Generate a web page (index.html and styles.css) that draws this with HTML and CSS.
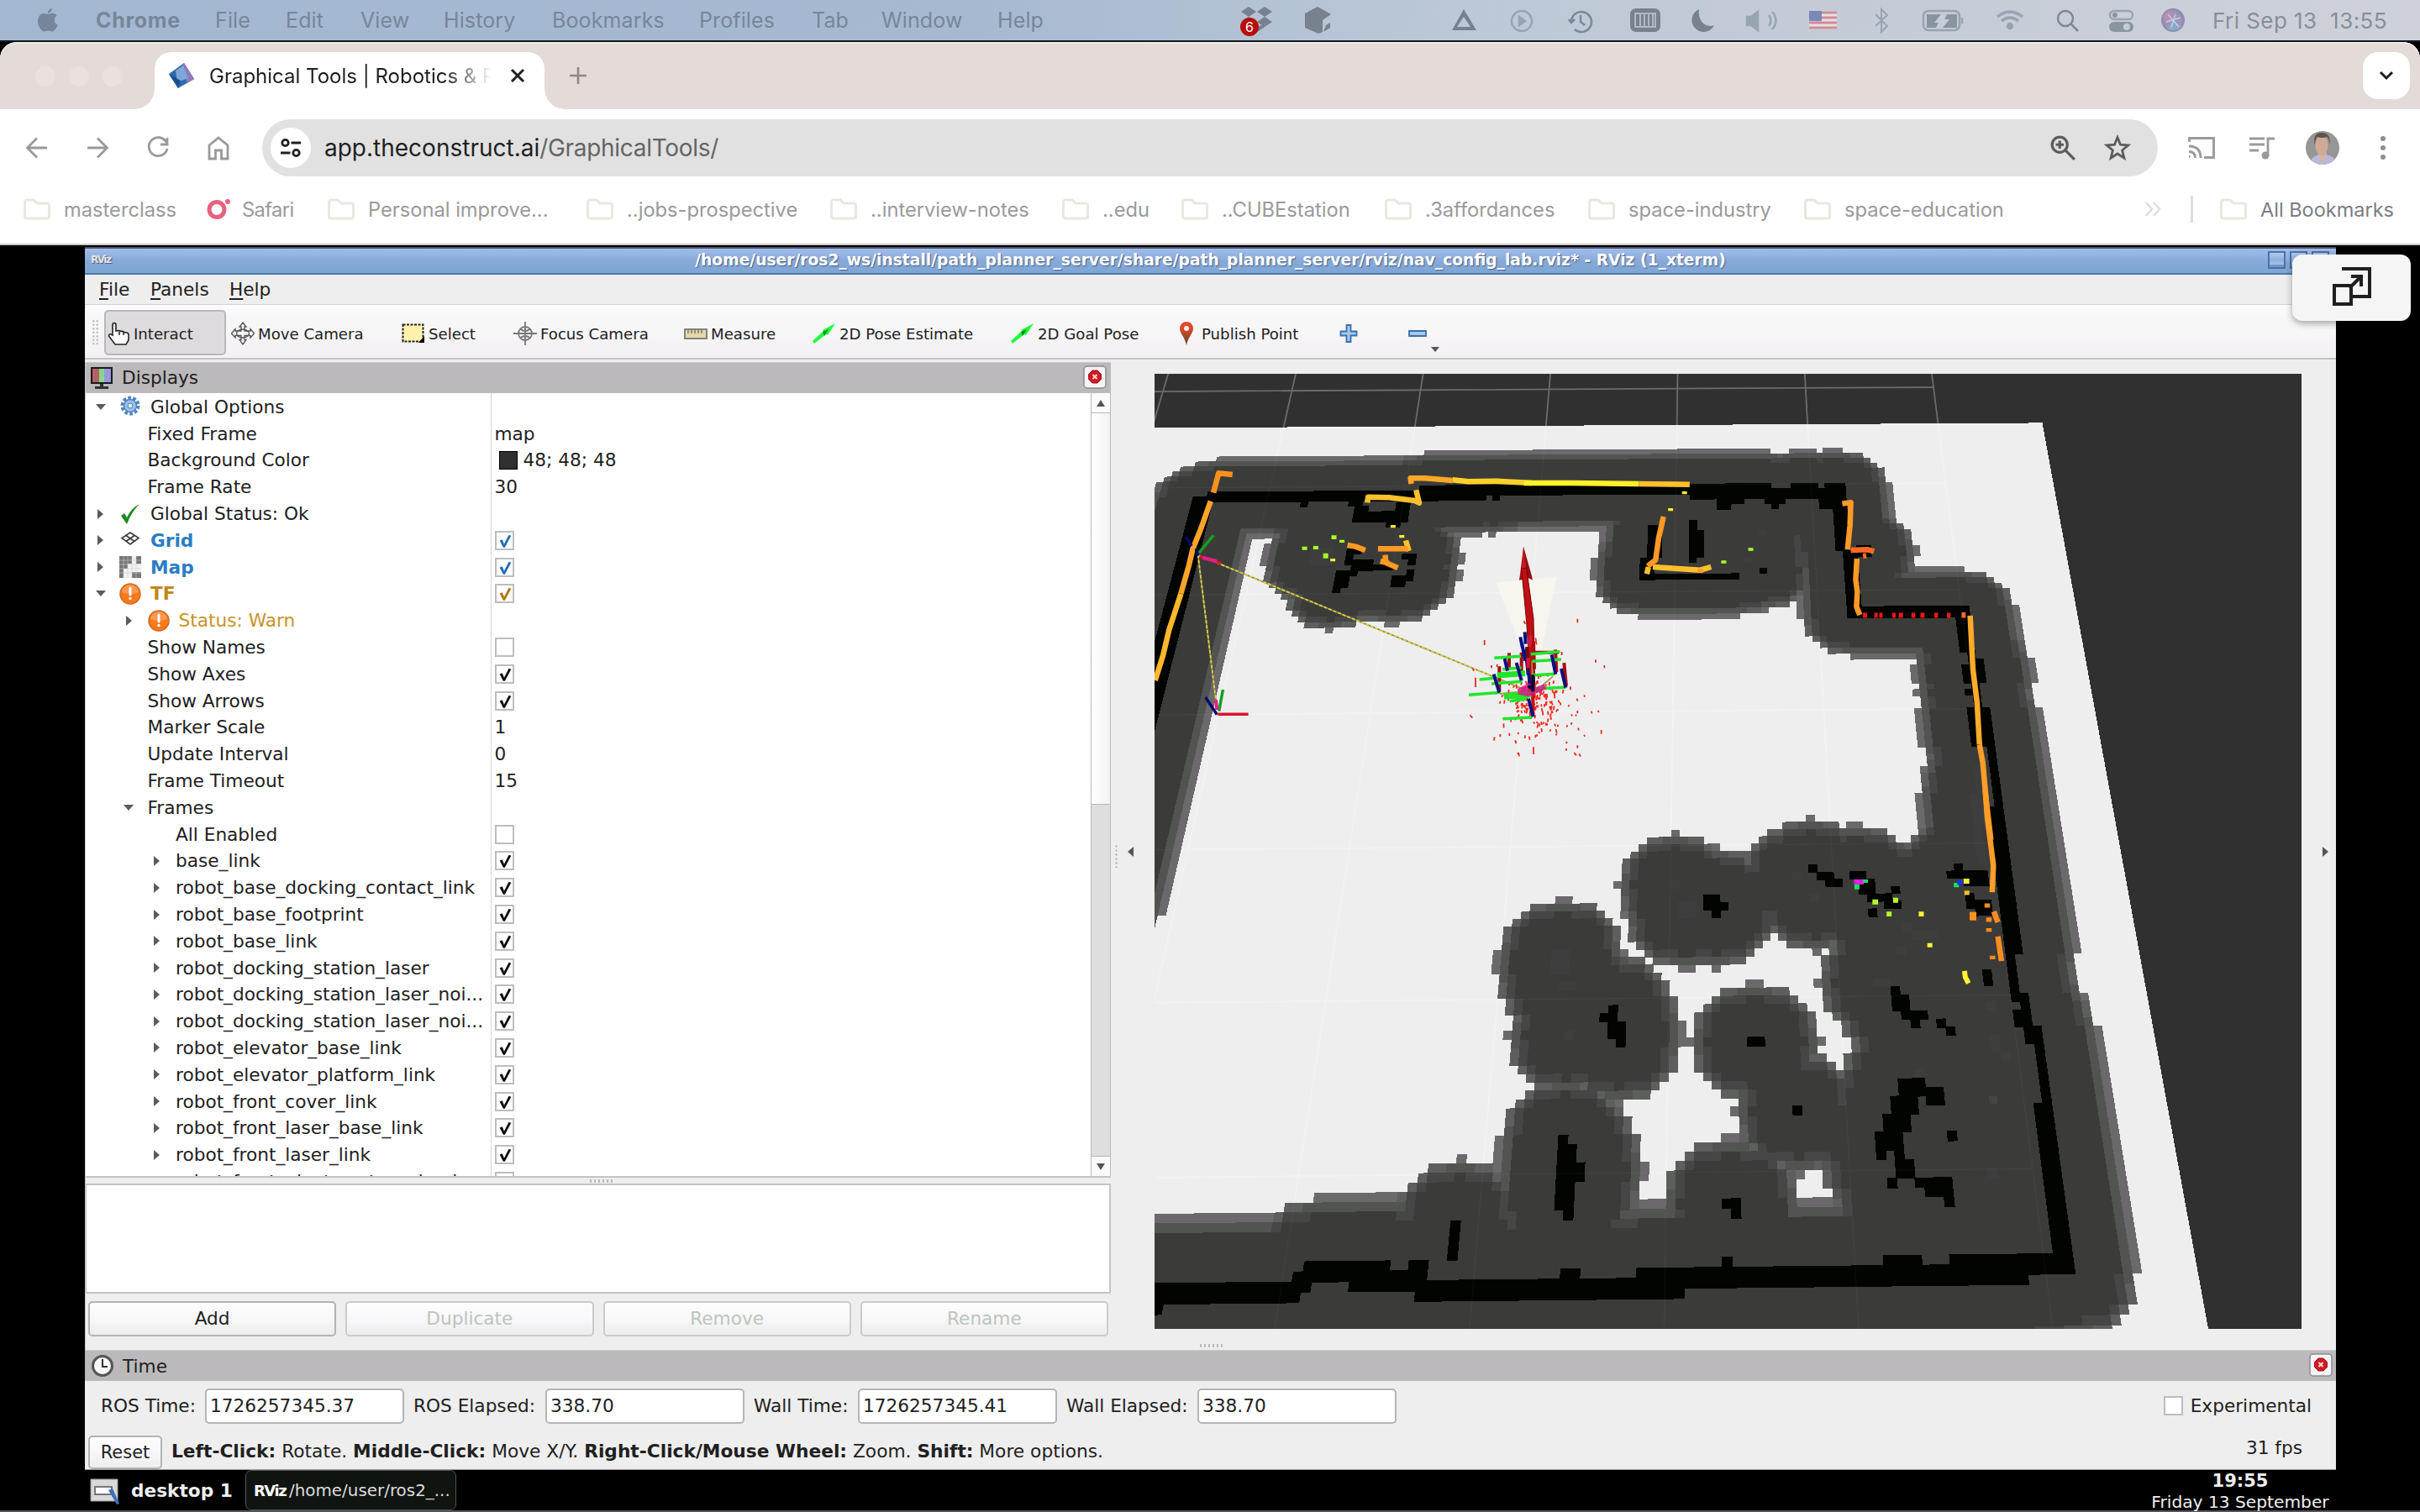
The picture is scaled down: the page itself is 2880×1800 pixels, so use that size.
FILE: index.html
```html
<!DOCTYPE html>
<html lang="en">
<head>
<meta charset="utf-8">
<title>Graphical Tools | Robotics</title>
<link rel="stylesheet" href="styles.css">
</head>
<body>
<svg class="defs" aria-hidden="true">
  <symbol id="tick" viewBox="0 0 22 22"><path d="M4 10.500 7.500 9l2.300 6L16 3l3 1-8.200 15.500H8.700z"/></symbol>
  <symbol id="folder" viewBox="0 0 32 26"><path d="M4 2h8l4 4h12a2.500 2.500 0 0 1 2.500 2.500v13A2.500 2.500 0 0 1 28 24H4a2.500 2.500 0 0 1-2.500-2.500v-17A2.500 2.500 0 0 1 4 2z" fill="none" stroke="#e7e8df" stroke-width="3"/></symbol>
  <symbol id="close" viewBox="0 0 28 28"><rect x="1" y="1" width="26" height="26" rx="4" fill="#f6f4f7" stroke="#8c8a8d" stroke-width="1.500"/><path d="M11 6h6l4.500 4.500v6L17 21h-6l-4.500-4.500v-6z" fill="#cf1b22" stroke="#a5141a"/><path d="m11.500 11 5 5m0-5-5 5" stroke="#f5d8d8" stroke-width="2"/></symbol>
  <symbol id="warn" viewBox="0 0 26 26"><circle cx="13" cy="13" r="12" fill="#f57a1c" stroke="#d9661a" stroke-width="1.500"/><path d="M3 11a10 9 0 0 1 20 0q-10 4-20 0z" fill="#f9a768" opacity=".7"/><path d="M13 6v8" stroke="#fff" stroke-width="3" stroke-linecap="round"/><circle cx="13" cy="18.500" r="1.700" fill="#fff"/></symbol>
  <symbol id="pose" viewBox="0 0 28 26"><path d="M0 22 13 10l-1-1L27 1 18 15l-2-1L2 25z" fill="#1dff3a"/><path d="m12 11 7-3-5 8z" fill="#12892a"/></symbol>
</svg>

<header class="menubar">
  <svg class="apple" viewBox="0 0 26 32"><path d="M18 2c0 3-2.500 5.500-5 5.500C12.800 4.500 15.500 2.200 18 2zM13 9c1.500 0 3-1.300 5.500-1.300 2 0 4 1.100 5.200 3-4.500 2.600-3.700 9 1 10.800C23.500 25 21 29.500 18.200 29.500c-1.800 0-2.600-1.100-4.800-1.100s-3 1.100-4.800 1.100C5 29.500 1 23 1 17.300 1 11.500 4.500 8 8 8c2.300 0 3.700 1 5 1z"/></svg>
  <nav class="menus">
    <b>Chrome</b><span>File</span><span>Edit</span><span>View</span><span>History</span><span>Bookmarks</span><span>Profiles</span><span>Tab</span><span>Window</span><span>Help</span>
  </nav>
  <svg class="tray" viewBox="1460 0 1160 48">
    <g fill="#78828e">
      <path d="m1486 8 9 6-9 6-9-6zM1505 8l9 6-9 6-9-6zM1486 20l9 6-9 6-9-6zM1505 20l9 6-9 6-9-6zM1495 33l10-5v4l-10 7z"/>
      <path d="m1568 8 16 9-10 7v14l-5 2-16-7V16zM1583 27v6l-8 5 3-8z"/>
      <path fill-rule="evenodd" d="M1742 11l15 25h-29zm0 9-8 12h16z"/>
      <rect x="1940" y="10" width="36" height="28" rx="7"/>
      <path d="M2022 11a14 14 0 1 0 18 19c-11 4-20-6-18-19z"/>
    </g>
    <rect x="1946" y="16" width="24" height="16" fill="none" stroke="#c0cad8" stroke-width="1.500"/><path d="M1952 17v14m5-14v14m5-14v14m5-14v14" stroke="#c0cad8" stroke-width="1.500"/>
    <g fill="none" stroke="#98a4b2" stroke-width="2.500">
      <circle cx="1811" cy="25" r="12"/><path d="m1808 20 7 5-7 5z" fill="#98a4b2"/>
      <path d="M2105 18q5 6 0 13m4-17q9 10 0 21"/><path d="M2079 20h5l8-6v22l-8-6h-5z" fill="#98a4b2"/>
      <path d="m2232 17 14 14-7 7V11l7 7-14 13" stroke-width="2"/>
      <rect x="2289" y="13" width="43" height="23" rx="6"/><path d="M2335 21v7"/>
      <path d="M2377 20q15-12 30 0m-25 5q10-8 20 0" stroke-width="3.500"/><circle cx="2392" cy="31" r="3" fill="#98a4b2"/>
    </g>
    <path d="M2293 17h17l-8 10h5l-3 6h-11zm36 0v16h-17l8-10h-6l3-6z" fill="#8a93a0"/>
    <g fill="none" stroke="#7c8896" stroke-width="2.500">
      <path d="M1870 26a12 12 0 1 1 4 9M1881 18v8l5 4m-19-7 3 4 4-4"/>
      <circle cx="2458" cy="22" r="9"/><path d="m2465 29 8 8"/>
      <rect x="2511" y="13" width="27" height="10" rx="5" stroke="#98a4b2"/>
    </g>
    <rect x="2510" y="26" width="29" height="12" rx="6" fill="#8a95a2"/><circle cx="2531" cy="32" r="4" fill="#c6cbd4"/><circle cx="2517" cy="18" r="3" fill="#8a95a2"/>
    <rect x="2153" y="13" width="33" height="22" fill="#e6dfe6"/><path d="M2153 15h33m-33 6h33m-33 6h33m-33 6h33" stroke="#d08c95" stroke-width="3"/><rect x="2153" y="13" width="15" height="12" fill="#7c88b8"/>
    <circle cx="2586" cy="24" r="14" fill="#8f8cb0"/><circle cx="2586" cy="24" r="11" fill="#a092b8"/><path d="M2584 24 2574 21a12 12 0 0 1 11-9z" fill="#b88fac"/><path d="M2586 24l10 7a12 12 0 0 1-17 3z" fill="#86a9c6"/><path d="m2580 17 13 15m-9 1 5-16m-11 9 17-5" stroke="#c9cde0" stroke-width="1.500"/>
    <circle cx="1487" cy="32" r="11" fill="#b90b07"/><text x="1487" y="38" text-anchor="middle" font-size="16" fill="#fff">6</text>
  </svg>
  <span class="clock">Fri Sep 13&nbsp; 13:55</span>
</header>

<section class="chrome">
  <div class="tabs">
    <i class="dot"></i><i class="dot"></i><i class="dot"></i>
    <div class="tab">
      <svg class="favicon" viewBox="0 0 30 30"><path d="M18 0 30 19 11 30 0 13z" fill="#2a6cae"/><path d="M18 0 30 19 22 24 14 6z" fill="#8f78bb"/><path d="m8 9 9-6 6 15-13 5z" fill="#7fa6d6"/><path d="m0 13 11 17 3-9z" fill="#1c4f90"/></svg>
      <span class="tabname">Graphical Tools | Robotics &amp; R</span>
      <svg class="x" viewBox="0 0 18 18"><path d="m2 2 14 14M16 2 2 16" stroke="#1f1f1f" stroke-width="3"/></svg>
    </div>
    <svg class="plus" viewBox="0 0 20 20"><path d="M10 0v20M0 10h20" stroke="#8e8985" stroke-width="2.600"/></svg>
    <span class="tabmenu"><svg viewBox="0 0 18 12"><path d="m2 2 7 7 7-7" fill="none" stroke="#1f1f1f" stroke-width="3"/></svg></span>
  </div>
  <div class="toolbar">
    <span class="nav"><svg viewBox="0 0 32 32"><path d="M28 16H5M16 4.500 4.500 16 16 27.500"/></svg></span>
    <span class="nav"><svg viewBox="0 0 32 32"><path d="M4 16h23M16 4.500 27.500 16 16 27.500"/></svg></span>
    <span class="nav"><svg viewBox="0 0 32 32"><path d="M26 9.500A11 11 0 1 0 27 17M27 4v8h-8"/></svg></span>
    <span class="nav"><svg viewBox="0 0 32 32"><path d="M5 13 16 4l11 9v16h-7.500V19h-7v10H5z"/></svg></span>
    <div class="omnibox">
      <span class="site"><svg viewBox="0 0 26 26"><g fill="none" stroke="#1f1f1f" stroke-width="2.800"><circle cx="6.500" cy="7" r="3.700"/><path d="M13.500 7H25M1 19h11.500"/><circle cx="19.500" cy="19" r="3.700"/></g></svg></span>
      <span class="url">app.theconstruct.ai<em>/GraphicalTools/</em></span>
      <span class="obi"><svg viewBox="0 0 30 30" fill="none" stroke="#5c5c5c" stroke-width="3"><circle cx="11.500" cy="11.500" r="8.500"/><path d="m18 18 10 10M11.500 7v9M7 11.500h9"/></svg></span>
      <span class="obi"><svg viewBox="0 0 32 32"><path d="m16 3.500 3.500 8.700 9.300.7-7.200 6 2.300 9.200L16 23l-7.900 5.100 2.300-9.200-7.200-6 9.300-.7z" fill="none" stroke="#5c5c5c" stroke-width="2.800"/></svg></span>
    </div>
    <span class="nav"><svg viewBox="0 0 32 32"><path d="M1.500 9V4.500h29v23H19M1 14q14 0 14 14M1 20.500q7.500 0 7.500 7.500M1 26.500h1.500"/></svg></span>
    <span class="nav"><svg viewBox="0 0 32 32"><path d="M1 5h18M1 12h18M1 19h11M23 25V5h8"/><circle cx="20" cy="25" r="4.500" fill="#9a9a9a" stroke="none"/></svg></span>
    <span class="nav"><svg class="avatar" viewBox="0 0 40 40"><defs><clipPath id="av"><circle cx="20" cy="20" r="20"/></clipPath></defs><g clip-path="url(#av)"><path d="M0 0h40v40H0z" fill="#969694"/><path d="M4 40q2-10 12-12h8q10 1 14 12z" fill="#bcb8da"/><path d="m14 26 6 14 5-14z" fill="#d5b5a8"/><ellipse cx="19" cy="17" rx="7.500" ry="12" fill="#d0a997"/><path d="M10.500 17Q8 2 19 2t9.500 14q-1-7-3-9-6 2-12 0-2 3-3 10z" fill="#5f5350"/></g></svg></span>
    <span class="nav"><svg viewBox="0 0 32 32"><g fill="#8e8e8e" stroke="none"><circle cx="16" cy="5" r="3"/><circle cx="16" cy="16" r="3"/><circle cx="16" cy="27" r="3"/></g></svg></span>
  </div>
  <div class="bookmarks">
    <span class="bm"><svg><use href="#folder"/></svg>masterclass</span>
    <span class="bm sf"><svg viewBox="0 0 32 26"><circle cx="16" cy="13.500" r="9" fill="none" stroke="#e8617e" stroke-width="5"/><circle cx="29" cy="4" r="3" fill="#e8617e"/></svg>Safari</span>
    <span class="bm"><svg><use href="#folder"/></svg>Personal improve...</span>
    <span class="bm"><svg><use href="#folder"/></svg>..jobs-prospective</span>
    <span class="bm"><svg><use href="#folder"/></svg>..interview-notes</span>
    <span class="bm"><svg><use href="#folder"/></svg>..edu</span>
    <span class="bm"><svg><use href="#folder"/></svg>..CUBEstation</span>
    <span class="bm"><svg><use href="#folder"/></svg>.3affordances</span>
    <span class="bm"><svg><use href="#folder"/></svg>space-industry</span>
    <span class="bm"><svg><use href="#folder"/></svg>space-education</span>
    <span class="more"><svg viewBox="0 0 20 18"><path d="m2 1 7 8-7 8m9-16 7 8-7 8" fill="none" stroke="#dedede" stroke-width="2.500"/></svg></span>
    <span class="bm all"><svg><use href="#folder"/></svg>All Bookmarks</span>
  </div>
</section>

<main class="stage">
  <div class="rviz">
    <div class="title"><i class="rvlogo">RViz</i><b>/home/user/ros2_ws/install/path_planner_server/share/path_planner_server/rviz/nav_config_lab.rviz* - RViz (1_xterm)</b><span class="wbtns"><i></i><i></i><i></i></span></div>
    <div class="qmenu"><span><u>F</u>ile</span><span><u>P</u>anels</span><span><u>H</u>elp</span></div>
    <div class="qtools">
      <span class="tool on"><svg viewBox="0 0 28 28"><path d="M7 14V4q0-2.500 2-2.500T11 4v7q4-1 6 .5 3-.5 4 1.500 4-1 5 2v7l-3 5H10L2.500 17q0-4 4.500-1z" fill="#fdfdfd" stroke="#222" stroke-width="1.600"/><path d="M15 12v4m5-4v4" stroke="#222" stroke-width="1.500"/></svg>Interact</span>
      <span class="tool"><svg viewBox="0 0 28 28" fill="none" stroke="#555" stroke-width="1.300"><path d="m14 1 4 5h-2v5h7V8.500l4.500 5.500-4.500 5v-2.500h-7v5h2L14 27l-4-5.500h2v-5H5V19L.5 14 5 8.500V11h7V6h-2z"/><ellipse cx="14" cy="14" rx="7.500" ry="5"/></svg>Move Camera</span>
      <span class="tool"><svg viewBox="0 0 28 28"><rect x="1.500" y="3.500" width="24" height="20" fill="#fff3ac" stroke="#222" stroke-width="2" stroke-dasharray="3 1.500"/><path d="m27 17v8h-7z" fill="#000"/></svg>Select</span>
      <span class="tool"><svg viewBox="0 0 28 28" fill="none" stroke="#777" stroke-width="1.800"><circle cx="14" cy="14" r="8"/><path d="M14 0v28M0 14h28M8.500 9q5.500 4 11 0M8.500 19q5.500-4 11 0"/></svg>Focus Camera</span>
      <span class="tool"><svg viewBox="0 0 28 28"><rect x="1" y="9" width="26" height="11" fill="#e5d9a5" stroke="#777" stroke-width="1.800"/><path d="M5 10v4m4-4v4m4-4v4m4-4v4m4-4v4" stroke="#777" stroke-width="1.500"/></svg>Measure</span>
      <span class="tool"><svg><use href="#pose"/></svg>2D Pose Estimate</span>
      <span class="tool"><svg><use href="#pose"/></svg>2D Goal Pose</span>
      <span class="tool"><svg viewBox="0 0 28 28"><defs><linearGradient id="pin" x2="0" y2="1"><stop offset=".3" stop-color="#dc4a2c"/><stop offset="1" stop-color="#5a4420"/></linearGradient></defs><path d="M14 0a8 8 0 0 1 8 8c0 6-6 10-8 20-2-10-8-14-8-20a8 8 0 0 1 8-8z" fill="url(#pin)"/><circle cx="14" cy="8" r="3" fill="#f6ece9"/></svg>Publish Point</span>
      <span class="tool"><svg viewBox="0 0 28 28"><path d="M11.500 4h5v7.500h7v5h-7V24h-5v-7.500h-7v-5h7z" fill="#a5c8ee" stroke="#3b6fa9" stroke-width="1.800"/></svg></span>
      <span class="tool"><svg viewBox="0 0 28 28"><path d="M4 11h20v6H4z" fill="#a5c8ee" stroke="#3b6fa9" stroke-width="1.800"/></svg><i class="drop"></i></span>
    </div>
    <div class="body">
      <div class="dock">
        <div class="dockhead"><svg viewBox="0 0 28 28"><path d="M1 1h26v20H1z" fill="#1b1b1b"/><path d="M3 3h8v16H3z" fill="#b65f66"/><path d="M11 3h6v16h-6z" fill="#86d88a"/><path d="M17 3h8v16h-8z" fill="#9a96e0"/><path d="M12 21h4v3h6v3H6v-3h6z" fill="#333"/></svg>Displays<svg class="cls"><use href="#close"/></svg></div>
        <div class="treebox">
          <div class="tree">
            <div class="row"><span class="n"><i class="ar d"></i><svg viewBox="0 0 26 26"><circle cx="13" cy="12" r="9.500" fill="none" stroke="#4f84bf" stroke-width="4" stroke-dasharray="3.700 2.270"/><circle cx="13" cy="12" r="7.500" fill="#9cc0e8" stroke="#4f84bf" stroke-width="1.500"/><circle cx="13" cy="12" r="3" fill="#dbe8f6" stroke="#4f84bf"/></svg>Global Options</span></div>
            <div class="row l1"><span class="n"><i class="ar"></i>Fixed Frame</span>map</div>
            <div class="row l1"><span class="n"><i class="ar"></i>Background Color</span><i class="sw"></i>48; 48; 48</div>
            <div class="row l1"><span class="n"><i class="ar"></i>Frame Rate</span>30</div>
            <div class="row"><span class="n"><i class="ar r"></i><svg viewBox="0 0 26 26"><path d="m2 15 4-3 3 5Q14 6 24 1 14 11 9 25z" fill="#1e8a22"/></svg>Global Status: Ok</span></div>
            <div class="row blue"><span class="n"><i class="ar r"></i><svg viewBox="0 0 26 26" fill="none" stroke="#3a3a3a" stroke-width="1.600"><path d="m13 4 10 6.500L13 18 3 10.500zM8 7.500l10 7m0-7-10 7"/></svg><b>Grid</b></span><i class="cb"><svg><use href="#tick"/></svg></i></div>
            <div class="row blue"><span class="n"><i class="ar r"></i><svg viewBox="0 0 26 26"><path d="M0 0h26v26H0z" fill="#f2f2f2"/><path d="M0 0h15v9h-5v6H5v11H0zM20 0h6v9h-6zM15 19h11v7H15z" fill="#777"/><path d="M5 0v26M10 0v26M15 0v26M20 0v26M0 5h26M0 10h26M0 15h26M0 20h26" stroke="#ccc" stroke-width=".6"/></svg><b>Map</b></span><i class="cb"><svg><use href="#tick"/></svg></i></div>
            <div class="row gold"><span class="n"><i class="ar d"></i><svg><use href="#warn"/></svg><b>TF</b></span><i class="cb"><svg><use href="#tick"/></svg></i></div>
            <div class="row l1 gold"><span class="n"><i class="ar r"></i><svg><use href="#warn"/></svg>Status: Warn</span></div>
            <div class="row l1"><span class="n"><i class="ar"></i>Show Names</span><i class="cb"></i></div>
            <div class="row l1"><span class="n"><i class="ar"></i>Show Axes</span><i class="cb"><svg><use href="#tick"/></svg></i></div>
            <div class="row l1"><span class="n"><i class="ar"></i>Show Arrows</span><i class="cb"><svg><use href="#tick"/></svg></i></div>
            <div class="row l1"><span class="n"><i class="ar"></i>Marker Scale</span>1</div>
            <div class="row l1"><span class="n"><i class="ar"></i>Update Interval</span>0</div>
            <div class="row l1"><span class="n"><i class="ar"></i>Frame Timeout</span>15</div>
            <div class="row l1"><span class="n"><i class="ar d"></i>Frames</span></div>
            <div class="row l2"><span class="n"><i class="ar"></i>All Enabled</span><i class="cb"></i></div>
            <div class="row l2"><span class="n"><i class="ar r"></i>base_link</span><i class="cb"><svg><use href="#tick"/></svg></i></div>
            <div class="row l2"><span class="n"><i class="ar r"></i>robot_base_docking_contact_link</span><i class="cb"><svg><use href="#tick"/></svg></i></div>
            <div class="row l2"><span class="n"><i class="ar r"></i>robot_base_footprint</span><i class="cb"><svg><use href="#tick"/></svg></i></div>
            <div class="row l2"><span class="n"><i class="ar r"></i>robot_base_link</span><i class="cb"><svg><use href="#tick"/></svg></i></div>
            <div class="row l2"><span class="n"><i class="ar r"></i>robot_docking_station_laser</span><i class="cb"><svg><use href="#tick"/></svg></i></div>
            <div class="row l2"><span class="n"><i class="ar r"></i>robot_docking_station_laser_noi...</span><i class="cb"><svg><use href="#tick"/></svg></i></div>
            <div class="row l2"><span class="n"><i class="ar r"></i>robot_docking_station_laser_noi...</span><i class="cb"><svg><use href="#tick"/></svg></i></div>
            <div class="row l2"><span class="n"><i class="ar r"></i>robot_elevator_base_link</span><i class="cb"><svg><use href="#tick"/></svg></i></div>
            <div class="row l2"><span class="n"><i class="ar r"></i>robot_elevator_platform_link</span><i class="cb"><svg><use href="#tick"/></svg></i></div>
            <div class="row l2"><span class="n"><i class="ar r"></i>robot_front_cover_link</span><i class="cb"><svg><use href="#tick"/></svg></i></div>
            <div class="row l2"><span class="n"><i class="ar r"></i>robot_front_laser_base_link</span><i class="cb"><svg><use href="#tick"/></svg></i></div>
            <div class="row l2"><span class="n"><i class="ar r"></i>robot_front_laser_link</span><i class="cb"><svg><use href="#tick"/></svg></i></div>
            <div class="row l2"><span class="n"><i class="ar"></i>robot_front_pivot_motor_wheel</span><i class="cb"></i></div>
          </div>
          <div class="scroll"><i class="sb up"></i><i class="thumb"></i><i class="track"></i><i class="sb down"></i></div>
        </div>
        <div class="grip"><i></i></div>
        <div class="desc"></div>
        <div class="btns"><span>Add</span><span class="off">Duplicate</span><span class="off">Remove</span><span class="off">Rename</span></div>
      </div>
      <div class="side"><i class="vgrip"></i><i class="tri l"></i></div>
      <div class="view">
        <svg class="scene" viewBox="1374 445 1365 1137" preserveAspectRatio="none">
          <rect x="1374" y="445" width="1365" height="1137" fill="#303030"/>
          <g id="map"></g>
          <g transform="translate(1370 440) scale(.4719 .33333)">
            <path class="ln" stroke="#ff9020" d="M205 375 170 370 157 440"/>
            <path class="ln" stroke="#ffa428" d="M150 470 125 570 105 640 95 700 75 800"/>
            <path class="ln" stroke="#ffb82a" d="M75 800 45 930 30 1020 10 1110"/>
            <path class="ln" stroke="#ffa828" d="M656 408 654 388 690 388 760 396"/>
            <path class="ln" stroke="#ffd02c" d="M760 394 800 400 870 398 960 405"/>
            <path class="ln" stroke="#fff02a" d="M940 405 1060 405 1230 408"/>
            <path class="ln" stroke="#ffc02c" d="M1230 408 1358 410M545 475 547 455 600 457 665 468 676 476 668 430"/>
            <path class="ln" stroke="#ffc02c" d="M642 610 650 648M1265 705 1385 716 1412 705M1254 705 1250 730"/>
            <path class="ln" stroke="#ff9a24" d="M648 640 572 640M590 662 592 690 622 708M495 627 515 632 540 645M578 684 600 692M1292 525 1280 600 1272 680 1252 702M1385 712v14"/>
            <path class="sq" stroke="#ffee30" d="M610 555v10M632 591v10M458 675v10M1345 435v10M1310 495v10"/>
            <path class="sq" stroke="#a6ff28" d="M461 592v14M481 608v10M387 632v12M415 630v12M440 656v18M1512 637v10M1444 682v10"/>
          </g>
          <g transform="translate(2000 440) scale(.4847 .35714)">
            <path class="ln" stroke="#ff9a26" d="M397 447 418 443 416 520 410 600M433 630 430 700 434 740 432 790 440 818"/>
            <path class="ln" stroke="#ff6a24" d="M418 602 460 600 475 606M448 622 456 620M690 818 700 818"/>
            <path class="sq" stroke="#ff1515" d="M448 819h10M476 819h8M488 819h8M520 819h8M536 819h10M567 819h9M589 819h10M623 819h9M654 819h9"/>
            <path class="ln" stroke="#ffab2a" d="M711 820 714 900 718 1000 728 1110 734 1250"/>
            <path class="ln" stroke="#ff9e28" d="M734 1250 742 1310 750 1430 762 1568"/>
          </g>
          <g transform="translate(1700 940) scale(.4847 .42088)">
            <path class="ln" stroke="#ff9e26" d="M1367 0 1372 80 1380 150 1387 215 1384 290"/>
            <path class="ln" stroke="#ff8c22" d="M1388 345 1398 375M1398 415 1407 485M1385 470v10M1376 362v12M1376 392v10M1372 322v12"/>
            <path class="sq w" stroke="#ff9020" d="M1337 346v24"/>
            <path class="sq" stroke="#ffc030" d="M1322 286v12"/>
            <path class="sq" stroke="#fff530" d="M1314 259h14M1210 345v14M1231 434v12M1316 513 1318 530 1326 548"/>
            <path class="sq" stroke="#b4ff28" d="M1090 318h14M1131 345v14M1147 306v14"/>
            <path class="sq" stroke="#e81cf0" d="M1045 261h24"/><path class="sq" stroke="#18e060" d="M1052 268v14M1296 264v12M1073 254v10"/><path class="sq" stroke="#1830ff" d="M1305 256v14"/>
          </g>
          <g transform="translate(1370 440) scale(.4719 .33333)">
            <path d="M870 760 1022 740 985 1000 925 965z" fill="#f6f6ee"/>
            <path class="t" stroke="#8a8530" d="M118 662 860 1095M118 662 164 1190"/>
            <path class="t" stroke="#d8cc58" stroke-dasharray="4 2" d="M118 662 860 1095M118 662 164 1190"/>
            <path class="a g" stroke="#12a01c" d="M120 655 157 592M171 1220 181 1143"/>
            <path class="a g" stroke="#07076e" d="M102 630 87 596M118 665 113 640M166 1232 137 1170"/>
            <path class="a g" stroke="#e0102a" d="M122 667 176 692M168 1231 245 1231"/><path class="a" stroke="#e0208a" d="M130 672 165 684M163 1180 166 1215"/>
            <path d="M939 632 960 738 962 752 952 745 928 752 930 735z" fill="#9a0d12"/><path d="M939 632 948 735 932 738z" fill="#c41a1a"/>
          </g>
          <g transform="translate(1720 720) scale(.33333)">
            <path d="M272 -130 290 -130 315 50 320 300 306 300 290 60z" fill="#c20f14" stroke="#6a0509" stroke-width="3"/>
            <path class="t" stroke="#a8a050" d="M180 260 300 310M195 318 290 308M385 255 350 285M310 200 312 290"/>
            <path id="specks" class="t" stroke="#ee2a20"/>
            <path class="a w" stroke="#a80c14" d="M228 172v60M193 220v90M272 170v70M310 170h95M393 160 397 240M424 207 432 290M300 170v140M315 130 318 230"/>
            <path class="a" stroke="#c80f14" d="M313 300v95"/>
            <path class="a g" stroke="#1fe62a" d="M175 190 270 184M305 176 410 167M310 202 414 195M205 230 272 224M185 247 285 240M185 257 285 250M122 267 175 262M165 282 275 274M310 252 392 247M318 300 430 295M84 322 195 313M208 322 300 316M210 332 305 326M230 344 290 336M205 407 310 402"/>
            <path class="a w" stroke="#0b0e80" d="M268 115 275 150M284 97 287 140M274 140 285 200M287 160 296 250M212 192 222 236M254 207 272 270M380 178 394 248M414 228 430 296M173 248 193 314M298 250 305 300M297 335 314 400"/>
            <path class="a" stroke="#66101a" d="M291 150 297 235"/>
            <path d="m258 300 40-20 25 15 30-12 8 18-35 15-30 12-35-8z" fill="#d01c82" opacity=".85"/>
            <path class="a w" stroke="#0a0730" d="M296 290 312 300M313 250v60"/>
            <path class="a" stroke="#d81a3c" d="M300 150 304 110M296 190v35"/>
          </g>
        </svg>
        <i class="hgrip"></i>
      </div>
      <div class="side rt"><i class="tri rr"></i></div>
    </div>
    <div class="dockhead time"><svg viewBox="0 0 28 28"><circle cx="14" cy="14" r="11.500" fill="#fafafa" stroke="#555" stroke-width="3"/><path d="M14 6v9h6" fill="none" stroke="#333" stroke-width="2"/></svg>Time<svg class="cls"><use href="#close"/></svg></div>
    <div class="timerow">
      <span>ROS Time:</span><span class="in">1726257345.37</span><span>ROS Elapsed:</span><span class="in">338.70</span><span>Wall Time:</span><span class="in">1726257345.41</span><span>Wall Elapsed:</span><span class="in">338.70</span>
      <label class="exp"><i class="cb"></i>Experimental</label>
    </div>
    <div class="status"><span class="reset">Reset</span><span class="hint"><b>Left-Click:</b> Rotate. <b>Middle-Click:</b> Move X/Y. <b>Right-Click/Mouse Wheel:</b> Zoom. <b>Shift:</b> More options.</span><span class="fps">31 fps</span></div>
  </div>
  <div class="task">
    <svg class="desk" viewBox="0 0 36 32"><path d="M1 1h32v26H1z" fill="#d9d9d9" stroke="#999"/><path d="M6 10h20v9H6z" fill="#fff" stroke="#777" stroke-width="2"/><path d="m22 14 5-2 8 18-3 1z" fill="#3f6fb5"/></svg>
    <b>desktop 1</b>
    <span class="taskbtn"><i class="rvlogo">RViz</i>/home/user/ros2_...</span>
    <div class="when"><b>19:55</b><span>Friday 13 September</span></div>
  </div>
  <div class="expand"><svg viewBox="0 0 46 46"><path d="M11 2h33v33H23M2 22h20v22H2zM20 25l14-14m-12 0h12v12" fill="none" stroke="#1f1f1f" stroke-width="4"/></svg></div>
</main>
<script src="scene.js"></script>
</body>
</html>
```
FILE: styles.css
```css
* { box-sizing: border-box; }
body { margin: 0; width: 2880px; height: 1800px; overflow: hidden; display: flex; flex-direction: column; background: #000; font-family: Inter, "Liberation Sans", sans-serif; }
i { font-style: normal; display: inline-block; flex: none; }
svg { flex: none; }
.defs { position: absolute; width: 0; height: 0; }

.menubar { height: 50px; border-bottom: 2px solid #11161f; display: flex; align-items: center; background: linear-gradient(90deg, #a4b7d1, #a6b9d1 40%, #bcc8d6 60%, #cfd1d9); color: #76869a; font-size: 25px; letter-spacing: .12px; white-space: nowrap; flex: none; }
.apple { width: 26px; height: 32px; margin-left: 44px; fill: #76869a; }
.menus { display: grid; grid-template-columns: 142px 84px 89px 99px 129px 175px 134px 83px 138px 60px; margin-left: 44px; width: 1346px; }
.menus > * { justify-self: start; }
.menus b { letter-spacing: .7px; }
.tray { width: 1160px; height: 48px; letter-spacing: 0; }
.clock { margin-left: 13px; color: #868f9b; font-size: 26px; letter-spacing: .45px; }

.chrome { height: 242px; flex: none; background: #fff; border-bottom: 2px solid #c9cacb; border-radius: 20px 20px 0 0; }
.tabs { height: 80px; background: #e3dbd8; border-top: 2px solid #efe9e6; border-radius: 20px 20px 0 0; display: flex; align-items: flex-end; padding-left: 42px; }
.dot { width: 24px; height: 24px; border-radius: 50%; background: #e8e1dd; margin: 0 16px 27px 0; }
.tab { position: relative; width: 464px; height: 68px; margin-left: 22px; background: #fff; border-radius: 20px 20px 0 0; display: flex; align-items: center; padding: 0 0 12px 17px; }
.tab::before, .tab::after { content: ""; position: absolute; bottom: 0; width: 24px; height: 24px; }
.tab::before { left: -24px; background: radial-gradient(circle at 0 0, transparent 23.500px, #fff 24px); }
.tab::after { right: -24px; background: radial-gradient(circle at 100% 0, transparent 23.500px, #fff 24px); }
.favicon { width: 30px; height: 30px; }
.tabname { margin-left: 18px; width: 336px; overflow: hidden; white-space: nowrap; font-size: 24px; color: #1f1f1f; -webkit-mask-image: linear-gradient(90deg, #000 84%, transparent 100%); mask-image: linear-gradient(90deg, #000 84%, transparent 100%); }
.x { width: 18px; height: 18px; margin-left: 22px; }
.plus { width: 20px; height: 20px; margin: 0 0 30px 30px; }
.tabmenu { width: 56px; height: 56px; border-radius: 18px; background: #fff; margin: 0 12px 12px auto; display: grid; place-items: center; }
.tabmenu svg { width: 18px; height: 12px; }
.toolbar { height: 84px; display: flex; align-items: center; padding: 8px 8px 0; }
.nav { width: 72px; display: grid; place-items: center; flex: none; }
.nav svg { width: 32px; height: 32px; fill: none; stroke: #9a9a9a; stroke-width: 2.8; }
.nav .avatar { width: 40px; height: 40px; stroke: none; }
.omnibox { width: 2256px; height: 68px; border-radius: 34px; background: #e1e1e1; margin: 0 16px; display: flex; align-items: center; padding: 0 16px 0 10px; flex: none; }
.site { width: 48px; height: 48px; border-radius: 50%; background: #fff; display: grid; place-items: center; }
.site svg { width: 26px; height: 26px; }
.url { margin: 0 auto 0 16px; font-size: 28px; color: #1f1f1f; }
.url em { font-style: normal; color: #646464; letter-spacing: -.3px; }
.obi { width: 65px; display: grid; place-items: center; }
.obi svg { width: 32px; height: 32px; }
.bookmarks { height: 72px; display: grid; align-items: center; padding: 0 0 2px 28px; font-size: 23.700px; color: #9a9a9a; white-space: nowrap; grid-template-columns: 214px 148px 308px 290px 276px 142px 242px 242px 257px 397px 63px 257px; }
.bm { display: flex; align-items: center; gap: 16px; }
.bm svg { width: 32px; height: 26px; }
.sf { letter-spacing: -.6px; gap: 14px; }
.more svg { width: 20px; height: 18px; display: block; margin-left: 8px; }
.all { border-left: 3px solid #e3dcd8; height: 32px; padding-left: 32px; gap: 16px; color: #7b7d82; font-size: 23.500px; }

.stage { flex: 1; position: relative; padding: 2px 0 0 101px; display: flex; flex-direction: column; font-family: "DejaVu Sans", sans-serif; font-size: 21.650px; color: #1e211e; background: #000; border-bottom: 2px solid #55545a; }
.rviz { width: 2679px; height: 1456px; background: #eee; display: flex; flex-direction: column; flex: none; }
.title { height: 33px; background: linear-gradient(#a2bcec, #86a8d6 55%, #7ea6d6); border-top: 2px solid #47526a; border-bottom: 2px solid #4b77aa; display: flex; align-items: center; justify-content: center; position: relative; color: #fff; font-size: 18.700px; text-shadow: 1px 1px 1px #3d5b86; white-space: nowrap; }
.title b { padding: 0 0 2px; }
.title .rvlogo { position: absolute; left: 7px; top: 6px; color: #e4e4e4; font-size: 12px; font-weight: bold; letter-spacing: -1.500px; }
.wbtns { position: absolute; right: 8px; top: 3px; display: flex; gap: 5px; }
.wbtns i { width: 21px; height: 21px; border: 2px solid #4b72a8; background: linear-gradient(#b3c9ee, #8fb0de 50%, #b3c9ee); box-shadow: inset 0 -4px 0 -1px #7397cc; }
.qmenu { height: 37px; border-bottom: 1px solid #d3d3d3; display: grid; grid-template-columns: 61px 94px 80px; padding-left: 17px; align-items: center; }
.qmenu u { text-underline-offset: 3px; }
.qtools { height: 65px; background: linear-gradient(#fdfbfd, #f7f7f8 25%, #f7f7f8 50%, #f5f2f6 70%); border-bottom: 2px solid #c3c3c3; display: grid; grid-template-columns: 149px 203px 133px 203px 153px 236px 195px 193px 82px 60px; padding: 3px 0 0 23px; align-items: center; font-size: 18.150px; flex: none; position: relative; white-space: nowrap; }
.qtools::before { content: ""; position: absolute; left: 8px; top: 17px; width: 9px; height: 30px; background: radial-gradient(circle, #b5b5b5 1px, transparent 1.300px) 0 0 / 4.500px 4.500px; }
.tool { display: flex; align-items: center; height: 54px; padding-left: 2px; gap: 4px; position: relative; padding-top: 2px; }
.tool svg { width: 28px; height: 28px; }
.on { width: 145px; background: #dddbdd; border: 2px solid #b9b7b9; border-radius: 5px; padding-left: 1px; gap: 4px; }
.drop { position: absolute; left: 32px; top: 44px; border: 5px solid transparent; border-top: 6px solid #555; border-bottom: 0; }
.body { height: 1179px; padding-top: 3px; display: flex; flex: none; }
.dock { width: 1221px; border-left: 1px solid #ccc; flex: none; }
.dockhead { height: 37px; background: #bbb9bb; display: flex; align-items: center; padding: 0 4px 1px 5px; gap: 10px; flex: none; border-top: 1px solid #cdcbcd; }
.dockhead svg { width: 28px; height: 28px; }
.dockhead .cls { margin: 0 1px 2px auto; }
.treebox { height: 934px; display: flex; background: #fff; border-bottom: 2px solid #c4c4c4; overflow: hidden; }
.tree { flex: 1; overflow: hidden; }
.row { height: 31.810px; display: flex; align-items: center; white-space: nowrap; }
.n { width: 483px; height: 100%; border-right: 1px solid #d6d6d6; margin-right: 3.500px; display: flex; align-items: center; flex: none; }
.l1 .n { padding-left: 33.500px; }
.l2 .n { padding-left: 67px; }
.ar { width: 35px; height: 100%; margin-right: 5px; display: grid; place-items: center; }
.ar.r::before { content: ""; border: 6.500px solid transparent; border-left: 7px solid #5a5c5a; border-right: 0; }
.ar.d::before { content: ""; border: 6.500px solid transparent; border-top: 7px solid #5a5c5a; border-bottom: 0; }
.n svg { width: 26px; height: 26px; margin-right: 11px; }
.cb { width: 23px; height: 23px; border: 2px solid #bdbdbd; background: #fff; display: grid; place-items: center; fill: #0c0c0c; }
.cb svg { width: 20px; height: 20px; }
.sw { width: 22px; height: 22px; background: #303030; border: 1px solid #000; margin: 0 7px 0 5px; }
.blue { fill: #2879c0; } .blue b { color: #2b7cc4; } .blue .cb { fill: #1f6cb4; }
.gold { color: #c8932a; } .gold b { color: #c28716; } .gold .cb { fill: #b0720c; }
.scroll { width: 24px; border-left: 1px solid #b9b9b9; border-right: 1px solid #b9b9b9; display: flex; flex-direction: column; }
.sb { height: 23px; background: #fafafa; display: grid; place-items: center; }
.sb::before { content: ""; border: 5.500px solid transparent; border-bottom: 8px solid #555; border-top: 0; }
.sb.down::before { border-top: 8px solid #555; border-bottom: 0; }
.thumb { height: 467px; background: linear-gradient(90deg, #fff, #f3f1f4); border: solid #b9b9b9; border-width: 1px 0; }
.track { flex: 1; background: #dedede; border-bottom: 1px solid #b9b9b9; }
.grip { height: 7px; display: grid; place-items: center; padding-left: 8px; }
.grip i, .hgrip { width: 28px; height: 4px; background: repeating-linear-gradient(90deg, #bbb 0 2px, transparent 2px 5px); }
.desc { height: 131px; background: #fff; border: 2px solid #c4c4c4; border-left: 1px solid #c4c4c4; }
.btns { display: grid; grid-template-columns: repeat(4, 1fr); gap: 11px; padding: 9px 3px 0 3px; }
.btns span, .reset { height: 42px; border: 2px solid #b3b3b3; border-radius: 5px; background: linear-gradient(#fefcff, #f8f7f9 50%, #ededed); text-align: center; line-height: 38px; }
.btns .off { color: #bcc5bc; border-color: #cbcbcb; }
.side { width: 52px; display: flex; align-items: center; flex: none; }
.rt { width: 41px; }
.vgrip { width: 5px; height: 28px; margin-left: 4px; background: radial-gradient(circle, #bbb 1px, transparent 1.300px) 0 0 / 5px 5px; }
.tri { border: 6px solid transparent; margin-bottom: 11px; }
.tri.l { border-right: 7px solid #555; border-left: 0; margin-left: 11px; }
.tri.rr { border-left: 7px solid #555; border-right: 0; margin-left: 25px; }
.view { width: 1365px; padding-top: 14px; }
.scene { width: 1365px; height: 1137px; display: block; }
.hgrip { margin: 18px 0 0 54px; display: block; }
.scene .ln, .scene .sq, .scene .t, .scene .a { fill: none; vector-effect: non-scaling-stroke; }
.ln { stroke-width: 6.500px; stroke-linejoin: round; }
.sq { stroke-width: 6px; } .sq.w { stroke-width: 8px; }
.t { stroke-width: 1.800px; }
.a { stroke-width: 4px; } .a.w { stroke-width: 4px; } .a.g { stroke-width: 3.500px; }
.time { padding: 0 3px 0 7px; }
.timerow { height: 61px; display: grid; grid-template-columns: 124px 248px 157px 248px 124px 248px 156px 236px 1fr; padding: 0 29px 2px 19px; align-items: center; }
.in { width: 237px; height: 42px; background: #fff; border: 2px solid #b5b5b5; border-radius: 5px; padding-left: 4px; line-height: 38px; }
.exp { display: flex; align-items: center; justify-content: flex-end; gap: 9px; }
.status { flex: 1; display: flex; align-items: center; padding: 1px 40px 0 4px; white-space: nowrap; border-bottom: 1px solid #999; }
.hint { font-size: 21.720px; }
.reset { width: 88px; height: 40px; margin: 3px 11px 0 0; font-size: 21px; line-height: 37px; }
.fps { margin: 0 0 8px auto; }
.task { height: 48px; display: flex; align-items: center; color: #eee; white-space: nowrap; }
.desk { width: 36px; height: 32px; margin: 4px 13px 0 6px; }
.task > b { width: 136px; }
.taskbtn { width: 251px; height: 48px; background: #101411; border: 1.500px solid #505250; border-radius: 7px; display: flex; align-items: center; padding-left: 9px; gap: 4px; color: #dcdcdc; font-size: 19.900px; }
.taskbtn .rvlogo { font-size: 18px; width: 38px; color: #fff; font-weight: bold; letter-spacing: -1.500px; }
.when { margin-left: auto; width: 214px; margin-right: 107px; padding-top: 4px; display: flex; flex-direction: column; align-items: center; font-size: 20.200px; line-height: 25px; }
.when b { font-size: 21px; }
.expand { position: absolute; left: 2728px; top: 11px; width: 141px; height: 79px; border-radius: 12px; background: #f5f5f5; display: grid; place-items: center; box-shadow: 0 3px 8px rgba(0,0,0,.35); }
.expand svg { width: 46px; height: 46px; margin-top: -4px; }
```
FILE: scene.js
```js
// Costmap scene: a ground plane in perspective, 0.05 m cells, 7-cell inflation.
const NS = 'http://www.w3.org/2000/svg';
const map = document.getElementById('map');

// Square-to-quad projection; s spans 6 grid columns, t spans 6 grid rows.
const q = [[1384, 466], [2301, 461], [2419, 1391.4], [1105.5, 1404.7]];
const [[x0, y0], [x1, y1], [x2, y2], [x3, y3]] = q;
const dx1 = x1 - x2, dx2 = x3 - x2, sx = x0 - x1 + x2 - x3;
const dy1 = y1 - y2, dy2 = y3 - y2, sy = y0 - y1 + y2 - y3;
const det = dx1 * dy2 - dx2 * dy1;
const g = (sx * dy2 - dx2 * sy) / det, h = (dx1 * sy - sx * dy1) / det;
const A = x1 - x0 + g * x1, B = x3 - x0 + h * x3, D = y1 - y0 + g * y1, E = y3 - y0 + h * y3;
function project(k, j) {
  const s = (k + 4) / 6, t = j / 6, w = g * s + h * t + 1;
  return [(A * s + B * t + x0) / w, (D * s + E * t + y0) / w];
}
const pt = (k, j) => project(k, j).map(v => v.toFixed(2)).join(' ');
function add(d, attrs) {
  const p = document.createElementNS(NS, 'path');
  p.setAttribute('d', d);
  for (const a in attrs) p.setAttribute(a, attrs[a]);
  map.appendChild(p);
}

// Obstacle shapes per region: origin, scale, then boxes [x0,x1,y0,y1] and polygons.
const regions = [
  { o: [1370, 440], s: [2.119, 3],
    boxes: [[373,390,470,490],[505,540,470,548],[540,645,512,548],[612,645,470,548],[600,672,440,475],[590,622,546,567],
      [490,525,645,665],[483,515,665,700],[510,560,685,715],[560,610,688,718],[465,510,718,745],[465,490,740,772],[455,472,770,803],
      [640,661,665,700],[638,656,720,755],[604,640,740,778],[858,873,450,472],
      [1252,1282,560,680],[1233,1264,675,752],[1262,1402,728,752],[1400,1478,730,750],[1355,1372,540,692],[1370,1388,580,675],[1532,1550,710,730]],
    polys: [[[100,460],[150,458],[150,443],[255,441],[610,438],[610,472],[505,476],[215,475],[145,478],[138,540],[115,680],[97,770],[85,860],[52,1000],[20,1200],[-60,1700],[-120,1960],[-160,1960],[-100,1600],[10,955],[45,770]],
      [[672,420],[1000,416],[1360,410],[1370,448],[1050,452],[850,456],[840,472],[675,472]]],
    ghosts: [[400,450,645,690],[405,420,620,640]] },
  { o: [2000, 440], s: [2.063, 2.8],
    boxes: [[20,90,386,432],[88,220,383,432],[218,272,400,432],[270,335,383,432],[330,355,398,432],[350,403,381,432],[88,122,432,468],[122,153,430,450],
      [205,257,430,450],[222,240,450,465],[340,404,430,465],[440,465,586,600],[440,460,612,630],[410,710,792,828],[690,708,985,1045],[725,748,968,1045],[698,718,1070,1088]],
    polys: [[[373,462],[405,462],[410,605],[425,610],[435,792],[440,828],[410,828],[398,605],[383,602]],
      [[676,825],[710,792],[722,965],[735,1050],[770,1258],[802,1568],[775,1568],[748,1262],[722,1258],[705,1135],[716,1120],[706,960],[686,945]]],
    ghosts: [[190,208,535,550],[160,177,625,640],[718,740,1320,1410],[714,742,1410,1470],[720,748,1470,1568]] },
  { o: [1700, 940], s: [2.063, 2.376],
    boxes: [[672,714,300,345],[712,733,322,345],[692,714,343,363],[930,950,217,237],[950,992,237,257],[972,1012,257,277],
      [1033,1072,237,257],[1050,1092,257,287],[1070,1095,285,318],[1093,1137,297,320],[1117,1157,318,340],[1135,1155,277,297],[1080,1100,342,360],
      [1290,1310,213,235],[1274,1380,235,253],[1310,1380,250,273],[1320,1342,290,335],[1340,1382,318,358],[1362,1382,514,557],
      [1136,1156,562,625],[1155,1178,585,655],[1176,1224,632,655],[1184,1205,653,677],[1246,1268,652,675],[1270,1292,675,697],
      [416,460,640,663],[440,460,615,640],[437,480,663,710],[458,480,708,733],[780,822,706,730],[892,913,902,925],
      [1152,1217,822,872],[1215,1265,846,896],[1135,1200,872,921],[1115,1180,920,972],[1097,1160,972,1022],[1100,1121,1021,1050],
      [1142,1165,1022,1052],[1145,1190,1050,1103],[1124,1147,1103,1130],[1195,1285,1103,1130],[1217,1287,1129,1155],[1265,1290,1154,1183],
      [1272,1296,973,997],[316,336,982,1008],[314,357,1007,1062],[312,378,1061,1112],[308,355,1111,1196],[328,350,1194,1219],
      [50,72,1225,1280],[44,68,1279,1333],[717,764,1164,1189],[740,764,1188,1215],
      [320,367,1363,1400],[720,740,1328,1370],[1115,1208,1323,1370],[1436,1470,628,672],[1474,1504,675,722]],
    polys: [[[-250,1392],[0,1392],[437,1388],[508,1386],[508,1360],[1050,1355],[1280,1350],[1282,1320],[1535,1320],[1483,750],[1465,672],[1428,557],[1393,340],[1378,0],[1407,0],[1455,557],[1485,672],[1518,750],[1586,1320],[1592,1376],[1472,1376],[1472,1406],[1190,1408],[620,1413],[620,1446],[283,1448],[-40,1450],[-40,1422],[-130,1420]]],
    ghosts: [[300,340,458,522],[315,357,545,570],[330,350,685,708],[610,650,322,365],[592,612,262,282],[893,912,237,258],[935,955,300,320],[1338,1362,0,215],
      [1165,1185,375,400],[1185,1240,395,430],[1150,1170,450,470],[1090,1130,540,563],[1370,1390,605,630],[1380,1405,700,730],[1400,1425,745,770],[1375,1397,1075,1100],[1195,1215,800,822]] },
  { o: [1290, 1350], s: [.986, 3],
    boxes: [[-80,250,542,610],[243,262,500,575],[256,358,461,532],[350,402,497,566],[378,402,461,530],[388,560,530,600],[60,90,608,650]],
    polys: [], ghosts: [] },
];
function inside(poly, x, y) {
  let r = false;
  for (let a = 0, b = poly.length - 1; a < poly.length; b = a++) {
    const [xa, ya] = poly[a], [xb, yb] = poly[b];
    if ((ya > y) !== (yb > y) && x < (xb - xa) * (y - ya) / (yb - ya) + xa) r = !r;
  }
  return r;
}
const N0 = -130, N1 = 56, M1 = 138, TOP = .39, STEP = .05;
const W = N1 - N0, dist = new Float32Array(W * M1).fill(99), solid = new Uint8Array(W * M1);
for (let m = 0; m < M1; m++) for (let n = 0; n < W; n++) {
  const [px, py] = project((n + N0 + .5) * STEP, TOP + (m + .5) * STEP);
  for (const r of regions) {
    const x = (px - r.o[0]) * r.s[0], y = (py - r.o[1]) * r.s[1];
    const hit = b => x >= b[0] && x < b[1] && y >= b[2] && y < b[3];
    if (r.boxes.some(hit) || r.polys.some(p => inside(p, x, y))) solid[m * W + n] = 1;
    else if (!solid[m * W + n] && r.ghosts.some(hit)) solid[m * W + n] = 2;
  }
}
const R = 7;
for (let m = 0; m < M1; m++) for (let n = 0; n < W; n++) {
  if (!solid[m * W + n]) continue;
  for (let b = -R; b <= R; b++) for (let a = -R; a <= R; a++) {
    const d = Math.hypot(a, b), c = n + a, e = m + b;
    if (d > R || c < 0 || c >= W || e < 0 || e >= M1) continue;
    if (d < dist[e * W + c]) dist[e * W + c] = d;
  }
}
// Obstacle, stale obstacle, then inflation from the core outwards.
const shades = ['#010401', '#3e3e3e', '#3b3c39', '#454645', '#525451', '#5d5f5d', '#6b696c'];
function shade(i) {
  if (solid[i]) return solid[i] - 1;
  const d = dist[i];
  return d > R ? -1 : d <= 5 ? 2 : d < 5.9 ? 3 : d < 6.1 ? 4 : d < 7 ? 5 : 6;
}

let grid = '';
for (let k = -9; k <= 2; k++) grid += `M${pt(k, -1)}L${pt(k, 8)}`;
for (let j = 0; j <= 7; j++) grid += `M${pt(-9, j)}L${pt(2, j)}`;
add(`M${pt(-9, TOP)}L${pt(2.8, TOP)}L${pt(2.8, 8)}L${pt(-9, 8)}z`, { fill: '#eeeeee', 'shape-rendering': 'crispEdges' });
add(grid, { fill: 'none', stroke: '#fff', 'stroke-opacity': .27, 'stroke-width': 1.8 });

// Runs of equal cells become one quad; each reaches slightly under the next
// row and column so that no seam shows. Outer shades are painted first.
const paths = shades.map(() => '');
const LAP = .006;
for (let m = 0; m < M1; m++) {
  const ja = TOP + m * STEP, jb = ja + STEP + LAP;
  for (let n = 0; n < W;) {
    const c = shade(m * W + n);
    let e = n + 1;
    while (e < W && shade(m * W + e) === c) e++;
    if (c >= 0) {
      const ka = (n + N0) * STEP, kb = (e + N0) * STEP + LAP;
      paths[c] += `M${pt(ka, ja)}L${pt(kb, ja)}L${pt(kb, jb)}L${pt(ka, jb)}z`;
    }
    n = e;
  }
}
for (let i = shades.length - 1; i >= 0; i--) add(paths[i], { fill: shades[i], 'shape-rendering': 'crispEdges' });
add(grid, { fill: 'none', stroke: '#fff', 'stroke-opacity': .03, 'stroke-width': 1.5 });

// Particle cloud: short ticks scattered around the robot base.
let seed = 11;
const rnd = () => (seed = (seed * 16807) % 2147483647) / 2147483647;
const gauss = () => rnd() + rnd() + rnd() + rnd() - 2;
let ticks = '';
const cloud = (count, cx, cy, rx, ry) => {
  for (let i = 0; i < count; i++) {
    const x = cx + gauss() * rx, y = cy + gauss() * ry;
    ticks += `M${x.toFixed(0)} ${y.toFixed(0)}l${((rnd() - .5) * 10).toFixed(0)} ${(6 + rnd() * 9).toFixed(0)}`;
  }
};
cloud(100, 315, 315, 75, 75);
cloud(80, 345, 390, 130, 95);
ticks += 'M472 50v14M140 126v18M537 196v10M568 216v10M88 394l9 10M315 508v26M557 447v14M432 513v8M460 528l8 10M472 502v10M478 532l5 10M545 378l4 6M497 322v8M447 292v12M416 168v12M185 212v10M165 216v10M108 260v34M98 228l4 8M280 58l6 10M322 118l4 24M196 462v10M495 464l4 6M521 380l3 8M472 378v10';
document.getElementById('specks').setAttribute('d', ticks);
```
